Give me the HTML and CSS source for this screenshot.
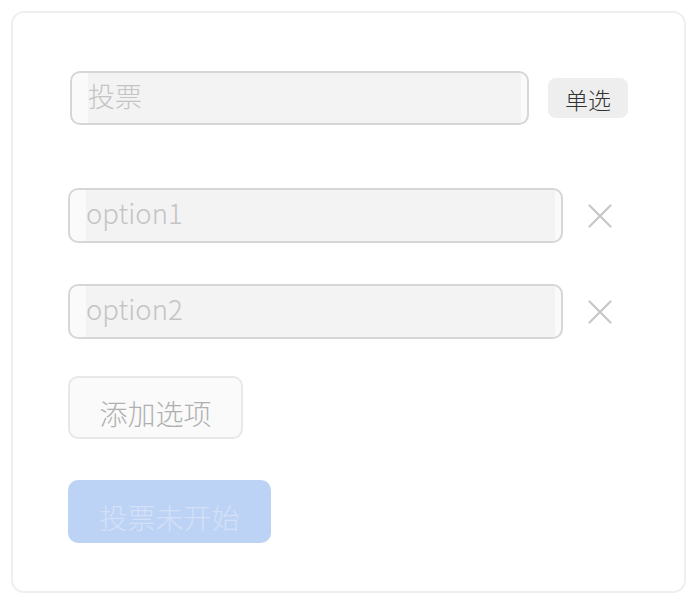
FILE: index.html
```html
<!DOCTYPE html>
<html lang="zh">
<head>
<meta charset="utf-8">
<title>投票</title>
<link rel="stylesheet" href="styles.css">
</head>
<body>
<div class="card">
  <div class="title-row">
    <div class="field title-field"><input class="field-input" type="text" placeholder="投票"></div>
    <button class="mode-btn" type="button">单选</button>
  </div>
  <div class="options">
    <div class="option-row">
      <div class="field option-field"><input class="field-input" type="text" placeholder="option1"></div>
      <span class="remove" aria-label="删除">
        <svg viewBox="0 0 24 24" width="24" height="24"><path d="M1.5 1.5 L22.5 22.5 M22.5 1.5 L1.5 22.5" stroke="#c9c9c9" stroke-width="2.4" fill="none" stroke-linecap="round"/></svg>
      </span>
    </div>
    <div class="option-row">
      <div class="field option-field"><input class="field-input" type="text" placeholder="option2"></div>
      <span class="remove" aria-label="删除">
        <svg viewBox="0 0 24 24" width="24" height="24"><path d="M1.5 1.5 L22.5 22.5 M22.5 1.5 L1.5 22.5" stroke="#c9c9c9" stroke-width="2.4" fill="none" stroke-linecap="round"/></svg>
      </span>
    </div>
  </div>
  <button class="add-btn" type="button">添加选项</button>
  <button class="submit-btn" type="button" disabled>投票未开始</button>
</div>
</body>
</html>
```

FILE: styles.css
```css
* { box-sizing: border-box; }

html, body {
  margin: 0;
  padding: 0;
  background: #ffffff;
}

body {
  font-family: "Noto Sans CJK SC", "Noto Sans", sans-serif;
}

.card {
  margin: 11px 0 0 11px;
  width: 675px;
  border: 2px solid #efefef;
  border-radius: 13px;
  padding: 58px 0 48px 55px;
  display: flex;
  flex-direction: column;
  align-items: flex-start;
}

.title-row {
  display: flex;
  align-items: center;
  gap: 19px;
  padding-left: 2px;
}

.field {
  display: flex;
  border: 2px solid #d6d6d6;
  border-radius: 10px;
  background: #fafafa;
  padding: 0 6px 0 16px;
}

.title-field {
  width: 459px;
  height: 54px;
}

.option-field {
  width: 495px;
  height: 55px;
}

.field-input {
  flex: 1;
  min-width: 0;
  border: none;
  outline: none;
  margin: 0;
  padding: 0;
  background: #f3f3f3;
  font-family: "Noto Sans CJK SC", "Noto Sans", sans-serif;
  font-weight: 300;
  font-size: 27.5px;
  color: #333;
}

.title-field .field-input {
  font-size: 27px;
  padding-bottom: 6px;
}

.option-field .field-input {
  padding-bottom: 8px;
}

.field-input::placeholder {
  color: #c4c4c4;
}

.mode-btn {
  width: 80px;
  height: 40px;
  border: none;
  border-radius: 8px;
  background: #eeeeee;
  color: #333333;
  font-family: "Noto Sans CJK SC", sans-serif;
  font-weight: 300;
  font-size: 23px;
  padding: 2px 0 0;
  line-height: 38px;
}

.options {
  margin-top: 63px;
  display: flex;
  flex-direction: column;
  gap: 41px;
}

.option-row {
  display: flex;
  align-items: center;
  gap: 25px;
}

.remove {
  display: flex;
  width: 24px;
  height: 24px;
}

.add-btn {
  margin-top: 37px;
  width: 175px;
  height: 63px;
  border: 2px solid #e8e8e8;
  border-radius: 10px;
  background: #fafafa;
  color: #b0b0b0;
  font-family: "Noto Sans CJK SC", sans-serif;
  font-weight: 300;
  font-size: 28px;
  padding: 10px 0 0;
}

.submit-btn {
  margin-top: 41px;
  width: 203px;
  height: 63px;
  border: none;
  border-radius: 10px;
  background: #bdd3f5;
  color: #d3e0f7;
  font-family: "Noto Sans CJK SC", sans-serif;
  font-weight: 300;
  font-size: 28px;
  padding: 10px 0 0;
}
```
